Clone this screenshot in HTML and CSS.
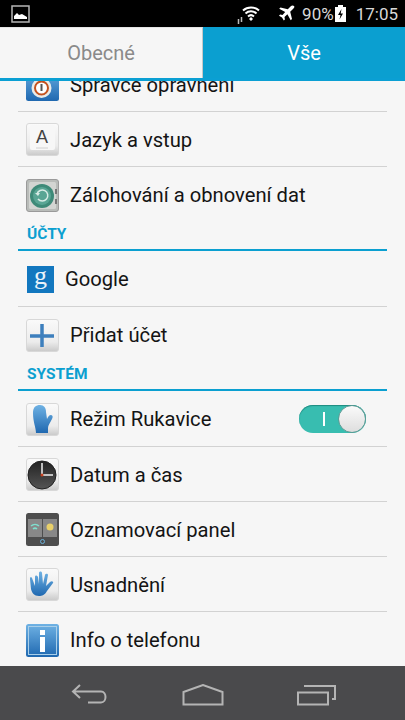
FILE: index.html
```html
<!DOCTYPE html>
<html lang="cs">
<head>
    <meta charset="UTF-8">
    <meta name="viewport" content="width=device-width, initial-scale=1.0">
    <title>Nastavení</title>
    <link rel="stylesheet" href="styles.css">
</head>
<body>
    <svg class="defs" width="0" height="0">
        <defs>
            <linearGradient id="tile" x1="0" y1="0" x2="0" y2="1">
                <stop offset="0" stop-color="#fafafa"/>
                <stop offset="0.7" stop-color="#ececec"/>
                <stop offset="1" stop-color="#c9c9c9"/>
            </linearGradient>
            <linearGradient id="blue" x1="0" y1="0" x2="0" y2="1">
                <stop offset="0" stop-color="#6fb2e4"/>
                <stop offset="1" stop-color="#1f68b0"/>
            </linearGradient>
            <linearGradient id="dial" x1="0" y1="0" x2="0" y2="1">
                <stop offset="0" stop-color="#222"/>
                <stop offset="1" stop-color="#555"/>
            </linearGradient>
        </defs>
    </svg>

    <div class="status-bar">
        <svg class="status-pic" width="20" height="18" viewBox="0 0 20 18">
            <rect x="1" y="1" width="17" height="16" fill="none" stroke="#b5b5b5" stroke-width="1.5"/>
            <path d="M3 14v-3l3-3 2 2 3-1 5 3v2z" fill="#fff"/>
        </svg>
        <div class="status-right">
            <svg width="24" height="20" viewBox="0 0 24 20">
                <path d="M6 6.500a12 12 0 0 1 16 0M8.500 9.500a8 8 0 0 1 11 0M11 12.500a4.500 4.500 0 0 1 6 0" fill="none" stroke="#fff" stroke-width="2"/>
                <path d="M12 15l2-2 2 2-2 2z" fill="#fff"/>
                <path d="M1.500 15v5M4.500 13v5" stroke="#bbb" stroke-width="1.500"/>
            </svg>
            <svg class="plane" width="17" height="17" viewBox="0 0 17 17">
                <path d="M16 1c-1-1-2.500-.5-3.500.5L9.800 4.300 2.500 2.500 1.200 3.800l6 3.300L4.500 10l-2.400-.4L1 10.700l3 1.800 1.800 3 1.100-1.100-.4-2.400 2.900-2.700 3.300 6 1.300-1.300-1.800-7.300 2.800-2.700C15.900 3 17 2 16 1z" fill="#fff"/>
            </svg>
            <span class="status-text pct">90%</span>
            <svg class="batt" width="11" height="17" viewBox="0 0 11 17">
                <path d="M3 0h5v2h3v15H0V2h3z" fill="#fff"/>
                <path d="M6.500 4L3 10h2.500l-1 4.500L8 8.500H5.700z" fill="#000"/>
            </svg>
            <span class="status-text">17:05</span>
        </div>
    </div>

    <div class="tabs">
        <div class="tab">Obecné</div>
        <div class="tab tab-active">Vše</div>
    </div>

    <div class="list">
        <div class="list-inner">
            <div class="row row-line">
                <svg class="icon" viewBox="0 0 33 33">
                    <rect width="33" height="33" rx="2.500" fill="url(#blue)"/>
                    <circle cx="15.500" cy="20" r="10" fill="#e9ebe9"/>
                    <circle cx="15.500" cy="20" r="6.500" fill="#fff" stroke="#c4521f" stroke-width="2"/>
                    <rect x="14.500" y="16" width="2" height="7" fill="#555"/>
                </svg>
                <span class="label">Správce oprávnění</span>
            </div>
            <div class="row row-line">
                <svg class="icon" viewBox="0 0 33 33">
                    <rect x="0.500" y="0.500" width="32" height="32" rx="2.500" fill="url(#tile)" stroke="#d8d8d8"/>
                    <rect x="4" y="2" width="25" height="25" rx="2" fill="#f7f7f7"/>
                    <text class="key-letter" x="16" y="20" text-anchor="middle">A</text>
                    <path d="M10 25h12" stroke="#d0d0d0"/>
                </svg>
                <span class="label">Jazyk a vstup</span>
            </div>
            <div class="row">
                <svg class="icon" viewBox="0 0 33 33">
                    <rect x="0.500" y="0.500" width="32" height="32" rx="2.500" fill="#b9bcb9" stroke="#9a9a9a"/>
                    <rect x="3" y="3" width="27" height="27" rx="1.500" fill="#d3d5d2"/>
                    <circle cx="16" cy="17" r="12" fill="#3e8a78"/>
                    <circle cx="16" cy="17" r="9" fill="#59a594"/>
                    <path d="M11 15a5.500 5.500 0 1 1 1 5" fill="none" stroke="#d8ece6" stroke-width="1.500"/>
                    <path d="M9 14h5l-2 3z" fill="#d8ece6"/>
                    <path d="M30 10v5M30 20v5" stroke="#777" stroke-width="2"/>
                </svg>
                <span class="label">Zálohování a obnovení dat</span>
            </div>

            <div class="section-head">ÚČTY</div>
            <div class="row row-line row-first">
                <svg class="icon-google" viewBox="0 0 27 27">
                    <rect width="27" height="27" fill="#1277bf"/>
                    <text class="g-letter" x="13.500" y="18" text-anchor="middle">g</text>
                </svg>
                <span class="label">Google</span>
            </div>
            <div class="row">
                <svg class="icon" viewBox="0 0 33 33">
                    <rect x="0.500" y="0.500" width="32" height="32" rx="2.500" fill="url(#tile)" stroke="#d8d8d8"/>
                    <path d="M16 5v23M4 17h24" stroke="#3d7fbd" stroke-width="3.500"/>
                </svg>
                <span class="label">Přidat účet</span>
            </div>

            <div class="section-head">SYSTÉM</div>
            <div class="row row-line row-first">
                <svg class="icon" viewBox="0 0 33 33">
                    <rect x="0.500" y="0.500" width="32" height="32" rx="2.500" fill="url(#tile)" stroke="#d8d8d8"/>
                    <path d="M7 10C7 4 10 2 14 2s6 3 6 7l1 7c1-2 2-4 4-4 2 .5 2 2 1 4-2 4-4 6-4 9v5H10c0-5-3-11-3-20z" fill="url(#blue)"/>
                </svg>
                <span class="label">Režim Rukavice</span>
                <div class="switch">
                    <span class="switch-mark"></span>
                    <span class="switch-knob"></span>
                </div>
            </div>
            <div class="row row-line">
                <svg class="icon" viewBox="0 0 33 33">
                    <rect x="0.500" y="0.500" width="32" height="32" rx="2.500" fill="url(#tile)" stroke="#d8d8d8"/>
                    <circle cx="16" cy="17" r="14" fill="url(#dial)" stroke="#222"/>
                    <path d="M16 5v12M16 17h11" stroke="#eee" stroke-width="1.500"/>
                    <circle cx="16" cy="17" r="1.500" fill="#c4401f"/>
                </svg>
                <span class="label">Datum a čas</span>
            </div>
            <div class="row row-line">
                <svg class="icon" viewBox="0 0 33 33">
                    <rect width="33" height="33" rx="2.500" fill="#4e4e4e"/>
                    <rect x="2" y="6" width="14" height="18" fill="#888"/>
                    <rect x="17" y="6" width="14" height="18" fill="#888"/>
                    <path d="M5 13a6 6 0 0 1 8 0M7 16a3 3 0 0 1 4 0" fill="none" stroke="#7fe0cf" stroke-width="1.500"/>
                    <circle cx="24" cy="14" r="3.500" fill="#e8d06a"/>
                    <circle cx="16.500" cy="28.500" r="2" fill="none" stroke="#6ab0d8"/>
                </svg>
                <span class="label">Oznamovací panel</span>
            </div>
            <div class="row row-line">
                <svg class="icon" viewBox="0 0 33 33">
                    <rect x="0.500" y="0.500" width="32" height="32" rx="2.500" fill="url(#tile)" stroke="#d8d8d8"/>
                    <path d="M6 10l3 8V9c0-2 2-2 3 0l1 7V5c0-2 3-2 3 0l1 11 2-9c1-2 3-1 3 0l-2 11 4-4c2-2 4 0 3 1l-6 8c-2 4-5 5-8 5-5 0-7-3-8-7L4 11c0-2 1-3 2-1z" fill="url(#blue)"/>
                </svg>
                <span class="label">Usnadnění</span>
            </div>
            <div class="row">
                <svg class="icon" viewBox="0 0 33 33">
                    <rect width="33" height="33" rx="2.500" fill="url(#blue)"/>
                    <rect x="2.500" y="2.500" width="28" height="28" fill="none" stroke="#a9cfe9"/>
                    <rect x="14" y="6" width="5" height="5" fill="#fff"/>
                    <rect x="14" y="13" width="5" height="15" fill="#fff"/>
                </svg>
                <span class="label">Info o telefonu</span>
            </div>
        </div>
    </div>

    <div class="nav-bar">
        <svg width="38" height="22" viewBox="0 0 38 22">
            <path d="M9 1L2 7.500l7 6.500M2 7.500h28c6 0 6 11 0 11H17" fill="none" stroke="#b4b4b4" stroke-width="2"/>
        </svg>
        <svg width="42" height="22" viewBox="0 0 42 22">
            <path d="M1.500 20.500V8L21 1l19.500 7v12.500z" fill="none" stroke="#b4b4b4" stroke-width="2"/>
        </svg>
        <svg width="40" height="22" viewBox="0 0 40 22">
            <path d="M1 8.500h30v12H1zM7 2h31v13h-3" fill="none" stroke="#b4b4b4" stroke-width="2"/>
        </svg>
    </div>
</body>
</html>
```

FILE: styles.css
```css
* {
    box-sizing: border-box;
}
body {
    margin: 0;
    width: 405px;
    height: 720px;
    display: flex;
    flex-direction: column;
    overflow: hidden;
    font-family: Roboto, sans-serif;
    background-color: #f6f6f6;
}
.defs {
    position: absolute;
}
.status-bar {
    height: 27px;
    flex: none;
    display: flex;
    align-items: center;
    justify-content: space-between;
    padding: 0 7px 0 11px;
    background-color: #000;
}
.status-right {
    display: flex;
    align-items: center;
}
.status-text {
    font-size: 17px;
    color: #d8d8d8;
}
.plane {
    margin-left: 17px;
}
.pct {
    margin-left: 7px;
}
.batt {
    margin: 0 10px 0 1px;
}
.tabs {
    position: relative;
    z-index: 1;
    height: 54px;
    flex: none;
    display: flex;
    border-bottom: 3px solid #0b9fd3;
    background-color: #f6f6f6;
}
.tab {
    flex: 1;
    display: flex;
    align-items: center;
    justify-content: center;
    font-size: 20px;
    color: #8a8a8a;
    border-top: 1px solid #e4e4e4;
    border-right: 1px solid #c8c8c8;
}
.tab-active {
    color: #fff;
    background-color: #0b9fd0;
    border: 0;
}
.list {
    flex: 1;
    overflow: hidden;
}
.list-inner {
    margin-top: -24px;
}
.row {
    height: 55px;
    margin: 0 18px;
    padding: 1px 0 0 8px;
    display: flex;
    align-items: center;
}
.row-first {
    height: 56px;
}
.row-line {
    border-bottom: 1px solid #d2d2d2;
}
.icon {
    width: 33px;
    height: 33px;
    flex: none;
    margin-right: 11px;
}
.icon-google {
    width: 27px;
    height: 27px;
    flex: none;
    margin: 0 11px 0 1px;
    overflow: visible;
}
.key-letter {
    font-family: "Liberation Sans", sans-serif;
    font-size: 18px;
    fill: #444;
}
.g-letter {
    font-family: "Liberation Serif", serif;
    font-size: 26px;
    fill: #e8f2fa;
}
.label {
    font-size: 20.2px;
    color: #141414;
    white-space: nowrap;
}
.section-head {
    height: 29px;
    margin: 0 18px;
    padding: 3px 0 0 9px;
    font-size: 15.5px;
    font-weight: 700;
    color: #0b9fd0;
    border-bottom: 2px solid #0b9fd0;
}
.switch {
    position: relative;
    width: 67px;
    height: 28px;
    margin-left: auto;
    margin-right: 21px;
    border-radius: 14px;
    background-color: #38bdb0;
    box-shadow: inset 0 1px 1px #1f8a80;
}
.switch-mark {
    position: absolute;
    left: 24px;
    top: 7px;
    width: 2px;
    height: 14px;
    background-color: #fff;
}
.switch-knob {
    position: absolute;
    right: 0;
    top: 0;
    width: 28px;
    height: 28px;
    border-radius: 50%;
    border: 1px solid #5d9a94;
    background: linear-gradient(#fafafa, #dedede);
}
.nav-bar {
    height: 54px;
    flex: none;
    display: flex;
    align-items: center;
    padding: 4px 0 0 71px;
    gap: 73px;
    background-color: #4a4a4c;
}
```
